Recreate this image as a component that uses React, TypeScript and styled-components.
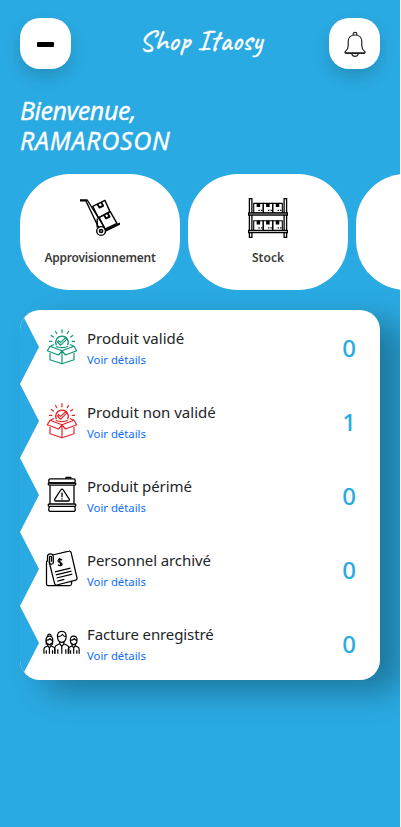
import React from "react";
import styled, { createGlobalStyle } from "styled-components";

const Global = createGlobalStyle`
  *{box-sizing:border-box}
  html,body{margin:0;height:100%;background:#fff;overflow:hidden}
  body{font-family:"Noto Sans","Open Sans",sans-serif;color:#212529}
`;
const Page = styled.main`
  width:400px;height:827px;padding:18px 20px 0;overflow:hidden;background:#2aaae2;
  display:flex;flex-direction:column;
`;
const Header = styled.header`display:flex;justify-content:space-between;width:360px;height:51px;`;
const RoundButton = styled.button`
  width:51px;height:51px;padding:0;border:0;border-radius:20px;background:#fff;
  display:flex;align-items:center;justify-content:center;flex:none;
  box-shadow:0 8px 16px rgba(0,0,0,.15);
`;
const Bar = styled.span`width:17px;height:5px;margin-top:2px;background:#000;border-radius:1px;`;
const Brand = styled.h1`
  margin:0;width:122px;padding:5px 0 0;color:#fff;white-space:nowrap;
  font:500 30px/34px "Caveat",cursive;-webkit-text-stroke:.4px #fff;
`;
const Welcome = styled.h2`
  margin:26px 0 0;color:#fff;font:italic 400 25px/30px "Noto Sans",sans-serif;height:60px;
  white-space:nowrap;-webkit-text-stroke:.3px #fff;
`;
const Line = styled.span<{ $track: number }>`display:block;letter-spacing:${p => p.$track}px;`;
const Cards = styled.nav`display:flex;gap:8px;margin-top:19px;width:380px;overflow:hidden;height:116px;flex:none;`;
const Card = styled.a`
  flex:none;width:160px;height:116px;border-radius:50px;background:#fff;
  display:flex;flex-direction:column;align-items:center;padding-top:24px;
  svg{display:block}
`;
const CardLabel = styled.span<{ $track: number }>`
  margin-top:11px;font-size:12px;line-height:18px;font-weight:600;color:#3c3c3c;letter-spacing:${p => p.$track}px;
`;
const Panel = styled.section`
  width:360px;margin-top:20px;border-radius:20px;background:#fff;overflow:hidden;flex:none;
  box-shadow:22px 12px 32px rgba(0,0,0,.3);z-index:1;
`;
const Row = styled.article`display:flex;height:74px;align-items:flex-start;`;
const Notch = styled.span`width:19px;height:74px;background:#2aaae2;clip-path:polygon(0 0,100% 50%,0 100%);flex:none;`;
const IconSlot = styled.span`width:36px;height:36px;margin:19px 7px 0 5px;flex:none;svg{display:block;overflow:visible}`;
const Copy = styled.div`flex:1;padding-top:16px;white-space:nowrap;`;
const Title = styled.div<{ $track: number }>`font-size:15px;line-height:24px;font-weight:400;letter-spacing:${p => p.$track}px;`;
const Detail = styled.a`display:block;margin-top:1px;font-size:11.3px;line-height:18px;color:#0d6efd;`;
const Count = styled.strong`
  font-size:24px;line-height:32px;font-weight:500;color:#2aaae2;margin:22px 24px 0 0;
`;

const Bell = () => (
  <svg width="22" height="26" viewBox="0 0 22 26" fill="none" stroke="#222" strokeWidth="1.2">
    <path d="M4.2 10.2C4.2 6.5 7 4 11 4s6.8 2.5 6.8 6.2v4.5c0 3.2 1.2 4.5 2.8 5.8.8.7.5 1.8-.5 1.8H1.9c-1 0-1.3-1.1-.5-1.8 1.6-1.3 2.8-2.6 2.8-5.8z" />
    <path d="M9.2 4.2V2.8c0-1.9 3.6-1.9 3.6 0v1.4M7.7 22.5c.5 3.8 6.1 3.8 6.6 0" />
    <path d="M1.3 22h19.4" strokeWidth="1.4" />
  </svg>
);
const Trolley = () => (
  <svg width="40" height="40" viewBox="0 0 40 40" fill="none" stroke="#000" strokeWidth="1.4" strokeLinejoin="round">
    <path d="M0 2h7.2L24.5 29.5M0 2.8h5.8L19 30.2" />
    <path d="m12.7 8.3 12.2-6 5.2 11.6-11.6 6zM19.1 19.4l11-6 6.9 11.9-12 5.8z" />
    <path d="m17.3 6 2.2 3.6 3.6-1.8-2-3.6M24 17l2.1 3.4 3.5-1.7-1.9-3.5" strokeWidth="1.9" />
    <path d="m25.6 31.8 14-6.5.3.8-14 6.7M17.2 20.5v9" />
    <circle cx="21.1" cy="33" r="4.4" /><circle cx="21.1" cy="33" r="1.5" strokeWidth="1.7" />
  </svg>
);
const Shelf = () => (
  <svg width="40" height="40" viewBox="0 0 40 40" fill="none" stroke="#000" strokeWidth="1.3">
    <path d="M1.4 .6h2.5v38.8H1.4zM36.1 .6h2.5v38.8h-2.5z" />
    {[5.4, 22.8].map(y => (
      <g key={y}>
        {[5.7, 15.2, 24.8].map(x => (
          <g key={x}>
            <path d={`M${x} ${y}h9.5v9.7H${x}z`} strokeWidth="1.1" />
            <path d={`M${x + 3.6} ${y}v3h2.2V${y}`} fill="#000" />
            <path d={`M${x + 4.8} ${y + 7}h1.3m1.2 0h1.3`} strokeWidth="1.3" />
          </g>
        ))}
        <path d={`M.6 ${y + 9.5}h38.8v2.2H.6z`} fill={y < 10 ? "#999" : "#fff"} />
      </g>
    ))}
  </svg>
);
const BoxCheck = ({ color }: { color: string }) => (
  <svg width="36" height="36" viewBox="0 0 36 36" fill="none" stroke={color} strokeWidth="1.2" strokeLinejoin="round">
    <path d="M6 22.5v8.2l12 4 12-4v-8.2M18 22v12.7M6 17.2l12 4.6 12-4.6-4.2-1.7M10.2 15.5 6 17.2M6 17.2l-2.7 4.5L14.5 26l3.5-4.2 3.5 4.2 11.2-4.3L30 17.2" />
    <path d="M12.4 16.3a6.3 6.3 0 1 1 11.2 0M12 17.5c3.2 1.4 8.8 1.4 12 0" />
    <path d="m13.4 13 3.3 3.2 6-6-1.4-1.4-4.6 4.6-2-1.8z" />
    <path d="M18 .2v4M11.3 2l1.7 3M24.7 2 23 5M6.8 6.3l3 2M29.2 6.3l-3 2M5 12.3h3.3M31 12.3h-3.3" />
  </svg>
);
const Barrel = () => (
  <svg width="36" height="36" viewBox="0 0 36 36" fill="none" stroke="#000" strokeWidth="1.3" strokeLinejoin="round">
    <rect x="4.8" y="1.8" width="26.4" height="4.2" rx="1.6" /><rect x="4.2" y="6" width="27.6" height="2.1" rx="1" />
    <path d="M22 1.7V.5h4.8v1.2M6 8.2v18.5M30 8.2v18.5" />
    <rect x="4.2" y="27" width="27.6" height="2.3" rx="1" /><path d="M5.2 29.5 4.7 33l1 1.4h24.6l1-1.4-.5-3.5" />
    <path d="m16.7 13-5.9 9.2c-.6 1 0 1.8 1 1.8h12.4c1 0 1.6-.8 1-1.8L19.3 13c-.6-1-2-1-2.6 0zM18 15.5v4.7M18 21.3v1.2" />
  </svg>
);
const Invoice = () => (
  <svg width="36" height="36" viewBox="0 0 36 36" fill="none" stroke="#000" strokeWidth="1.25" strokeLinejoin="round">
    <path d="M8.5 4 25 .2c1-.3 1.7.2 2 1L33 27c.2 1-.2 1.8-1.2 2.1L12.8 34c-1 .3-1.8-.2-2.1-1.2L5 10.5M3.5 9.5 2.5 11v22c0 1 .5 1.7 1.8 1.7h21.5c1 0 1.5-.6 1.8-2v-2" />
    <path d="M3.5 10.5V5.6c0-3.8 5.8-3.8 5.8 0v5.8c0 2.4-3.8 2.4-3.8 0V6.1c0-1 2-1 2 0v4.7" />
    <path d="M18 9.2c-2.6-2.8-6.2 1.1-2 2.3 4.4 1.1.9 4.9-2 2.2M15.2 7l1.8 8" />
    <path d="m11 20.9 15.5-3.8M11.8 23.9l15.7-3.8M12.6 27l15.7-3.8M13.4 30.1l7-1.7" />
  </svg>
);
const Person = ({ x, y, s, woman = false }: { x: number; y: number; s: number; woman?: boolean }) => (
  <g transform={`translate(${x} ${y}) scale(${s})`} strokeWidth={1.2 / s}>
    <path d="M-4.2-3.2C-5-8.5-2.5-10 0-10s5 1.5 4.2 6.8C3.8-.8 2 1 0 1s-3.8-1.8-4.2-4.2zM-4.3-4.5c3-.1 4.2-1 5-2.3 1 1.6 2 2.1 3.5 2.2" />
    <path d="M-2 0v2.5L-5.2 4C-6.8 4.6-7 6-7 7v5.5M2 0v2.5L5.2 4C6.8 4.6 7 6 7 7v5.5M-2 2.5 0 5l2-2.5M0 5v7.5M-4 8v4.5M4 8v4.5" />
    {woman && <path d="M-2-10c-1-3.5 5-3.5 4 0M-4-5v6M4-5v6" />}
  </g>
);
const People = () => (
  <svg width="36" height="36" viewBox="0 0 36 36" fill="none" stroke="#000" strokeLinejoin="round">
    <Person x={5.4} y={18.9} s={0.78} woman /><Person x={29.7} y={18.9} s={0.78} /><Person x={17.8} y={16.3} s={1} />
  </svg>
);

const rows = [
  { title: "Produit validé", count: 0, track: 0, icon: <BoxCheck color="#109778" /> },
  { title: "Produit non validé", count: 1, track: 0, icon: <BoxCheck color="#e52429" /> },
  { title: "Produit périmé", count: 0, track: -0.08, icon: <Barrel /> },
  { title: "Personnel archivé", count: 0, track: -0.1, icon: <Invoice /> },
  { title: "Facture enregistré", count: 0, track: -0.1, icon: <People /> },
];

export default function App() {
  return (
    <>
      <Global />
      <Page>
        <Header>
          <RoundButton aria-label="Menu"><Bar /></RoundButton>
          <Brand>Shop Itaosy</Brand>
          <RoundButton aria-label="Notifications"><Bell /></RoundButton>
        </Header>
        <Welcome><Line $track={-0.45}>Bienvenue,</Line><Line $track={0.7}>RAMAROSON</Line></Welcome>
        <Cards>
          <Card><Trolley /><CardLabel $track={-0.25}>Approvisionnement</CardLabel></Card>
          <Card><Shelf /><CardLabel $track={0}>Stock</CardLabel></Card>
          <Card />
        </Cards>
        <Panel>
          {rows.map(r => (
            <Row key={r.title}>
              <Notch />
              <IconSlot>{r.icon}</IconSlot>
              <Copy><Title $track={r.track}>{r.title}</Title><Detail>Voir détails</Detail></Copy>
              <Count>{r.count}</Count>
            </Row>
          ))}
        </Panel>
      </Page>
    </>
  );
}
